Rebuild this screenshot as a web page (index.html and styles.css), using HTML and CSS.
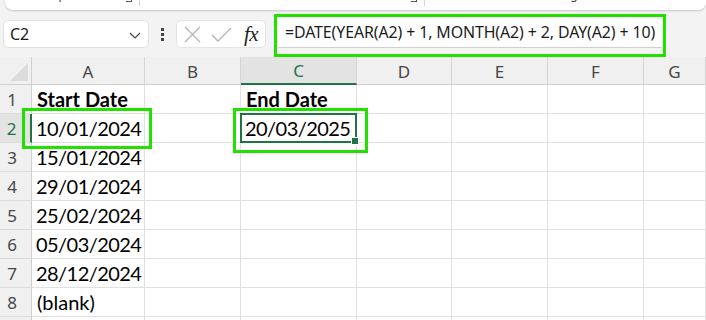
FILE: index.html
```html
<!DOCTYPE html>
<html>
<head>
<meta charset="utf-8">
<link rel="stylesheet" href="styles.css">
</head>
<body>
<div class="page">
  <div class="ribbon">
    <div class="rib-labels">
      <div class="rib-group g1"><span class="rib-label">Clipboard</span><span class="launcher"></span></div>
      <div class="rib-group g2"><span class="rib-label">Font</span><span class="launcher"></span></div>
      <div class="rib-group g3"><span class="rib-label">Alignment</span></div>
    </div>
  </div>

  <div class="fbar">
    <div class="namebox">
      <span class="name">C2</span>
      <svg class="chev" width="12" height="7" viewBox="0 0 12 7"><path d="M1 1 L6 6 L11 1" fill="none" stroke="#444" stroke-width="1.2"/></svg>
    </div>
    <div class="dots"><i></i><i></i><i></i></div>
    <div class="fxbox">
      <svg class="ico" width="17" height="17" viewBox="0 0 17 17"><path d="M1 1 L16 16 M16 1 L1 16" stroke="#b4b4b4" stroke-width="1.3" fill="none"/></svg>
      <svg class="ico" width="21" height="15" viewBox="0 0 21 15"><path d="M1 8 L7 14 L20 1" stroke="#b4b4b4" stroke-width="1.3" fill="none"/></svg>
      <span class="fx">fx</span>
    </div>
    <div class="formula">=DATE(YEAR(A2) + 1, MONTH(A2) + 2, DAY(A2) + 10)</div>
  </div>

  <div class="grid">
    <div class="corner"><svg width="20" height="20" viewBox="0 0 20 20"><path d="M20 2 L20 20 L2 20 Z" fill="#dcdcdc"/></svg></div>
    <div class="ch">A</div><div class="ch">B</div><div class="ch sel">C</div><div class="ch">D</div><div class="ch">E</div><div class="ch">F</div><div class="ch">G</div>

    <div class="rh">1</div><div class="c b">Start Date</div><div class="c"></div><div class="c b">End Date</div><div class="c"></div><div class="c"></div><div class="c"></div><div class="c"></div>
    <div class="rh sel">2</div><div class="c n">10/01/2024</div><div class="c"></div><div class="c n active">20/03/2025</div><div class="c"></div><div class="c"></div><div class="c"></div><div class="c"></div>
    <div class="rh">3</div><div class="c n">15/01/2024</div><div class="c"></div><div class="c"></div><div class="c"></div><div class="c"></div><div class="c"></div><div class="c"></div>
    <div class="rh">4</div><div class="c n">29/01/2024</div><div class="c"></div><div class="c"></div><div class="c"></div><div class="c"></div><div class="c"></div><div class="c"></div>
    <div class="rh">5</div><div class="c n">25/02/2024</div><div class="c"></div><div class="c"></div><div class="c"></div><div class="c"></div><div class="c"></div><div class="c"></div>
    <div class="rh">6</div><div class="c n">05/03/2024</div><div class="c"></div><div class="c"></div><div class="c"></div><div class="c"></div><div class="c"></div><div class="c"></div>
    <div class="rh">7</div><div class="c n">28/12/2024</div><div class="c"></div><div class="c"></div><div class="c"></div><div class="c"></div><div class="c"></div><div class="c"></div>
    <div class="rh">8</div><div class="c">(blank)</div><div class="c"></div><div class="c"></div><div class="c"></div><div class="c"></div><div class="c"></div><div class="c"></div>
    <div class="rh">9</div><div class="c"></div><div class="c"></div><div class="c"></div><div class="c"></div><div class="c"></div><div class="c"></div><div class="c"></div>
  </div>

  <div class="hl hl-formula"></div>
  <div class="hl hl-a2"></div>
  <div class="hl hl-c2"></div>
</div>
</body>
</html>
```

FILE: styles.css
```css
* { box-sizing: border-box; }
html, body { margin: 0; padding: 0; }
body {
  width: 706px;
  height: 320px;
  overflow: hidden;
  background: #f3f3f3;
  font-family: "Noto Sans", "Open Sans", sans-serif;
}
.page {
  position: relative;
  width: 706px;
  height: 320px;
  overflow: hidden;
}

/* ribbon remnant */
.ribbon {
  height: 10px;
  margin-left: 5px;
  background: #ffffff;
  border-radius: 0 0 8px 8px;
  box-shadow: 0 1px 2px rgba(0,0,0,0.18);
  overflow: hidden;
}
.rib-labels {
  display: flex;
  margin-top: -12px;
  height: 22px;
}
.rib-group {
  position: relative;
  display: flex;
  justify-content: center;
  border-right: 1px solid #d6d6d6;
  height: 18px;
  font-size: 12px;
  line-height: 14px;
  color: #444;
}
.g1 { width: 135px; }
.g2 { width: 285px; }
.g3 { flex: 1; border-right: none; padding-left: 40px; }
.launcher {
  position: absolute;
  right: 7px;
  top: 8px;
  width: 6px;
  height: 6px;
  border-right: 1px solid #555;
  border-bottom: 1px solid #555;
}

/* formula bar */
.fbar {
  display: flex;
  align-items: flex-start;
  height: 47px;
  padding-top: 10px;
}
.namebox {
  margin-left: 3px;
  width: 146px;
  height: 28px;
  background: #fff;
  border: 1px solid #e1e1e1;
  border-radius: 5px;
  display: flex;
  align-items: center;
  justify-content: space-between;
  padding: 0 7px 0 6px;
}
.name { font-size: 16px; color: #1b1b1b; }
.chev { margin-top: 2px; }
.dots {
  width: 27px;
  height: 28px;
  display: flex;
  flex-direction: column;
  align-items: center;
  justify-content: center;
  gap: 2px;
}
.dots i {
  display: block;
  width: 3px;
  height: 3px;
  background: #444;
}
.fxbox {
  width: 90px;
  height: 28px;
  background: #fff;
  border: 1px solid #e4e4e4;
  border-radius: 5px;
  display: flex;
  align-items: center;
  padding-left: 7px;
  gap: 10px;
}
.fx {
  font-family: "Liberation Serif", "DejaVu Serif", serif;
  font-style: italic;
  font-size: 21px;
  color: #222;
  margin-left: 2px;
  letter-spacing: -0.5px;
}
.formula {
  margin-left: 12px;
  margin-top: -3px;
  width: 384px;
  height: 31px;
  background: #fff;
  border-bottom: 1px solid #d0d0d0;
  font-size: 15.9px;
  line-height: 31px;
  padding-left: 7px;
  color: #1b1b1b;
  white-space: nowrap;
  letter-spacing: -0.1px;
}

/* grid */
.grid {
  display: grid;
  grid-template-columns: 32px 113px 96px 116px 95px 96px 96px 62px;
  grid-template-rows: 28px repeat(9, 29px);
  background: #fff;
}
.corner {
  background: #f0f0f0;
  border-right: 1px solid #d0d0d0;
  border-bottom: 1px solid #d0d0d0;
  display: flex;
  align-items: flex-end;
  justify-content: flex-end;
  padding: 0 3px 3px 0;
}
.ch {
  background: #f0f0f0;
  border-right: 1px solid #d6d6d6;
  border-bottom: 1px solid #d0d0d0;
  display: flex;
  align-items: center;
  justify-content: center;
  font-size: 17px;
  color: #474747;
  padding-top: 1px;
}
.ch.sel {
  background: #e3e3e3;
  color: #217346;
  border-bottom: 2px solid #217346;
}
.rh {
  background: #f0f0f0;
  border-right: 1px solid #d0d0d0;
  border-bottom: 1px solid #dcdcdc;
  display: flex;
  align-items: center;
  justify-content: center;
  padding-right: 7px;
  font-size: 17px;
  color: #474747;
}
.rh.sel {
  background: #e3e3e3;
  color: #217346;
  border-right: 2px solid #217346;
}
.c {
  border-right: 1px solid #e0e0e0;
  border-bottom: 1px solid #e0e0e0;
  display: flex;
  align-items: flex-end;
  padding: 0 0 2px 5px;
  font-family: "Lato", "Noto Sans", sans-serif;
  font-size: 20px;
  line-height: 24px;
  color: #000;
  white-space: nowrap;
}
.c.n { letter-spacing: -0.55px; padding-left: 4px; }
.c.b { font-weight: bold; }
.c.active { position: relative; overflow: visible; }
.c.active::after {
  content: "";
  position: absolute;
  left: -1px;
  top: -1px;
  right: -1px;
  bottom: -1px;
  border: 2px solid #217346;
}
.c.active::before {
  content: "";
  position: absolute;
  right: -3px;
  bottom: -3px;
  width: 6px;
  height: 6px;
  background: #217346;
  border: 1px solid #fff;
  z-index: 2;
}

/* green annotation boxes */
.hl {
  position: absolute;
  border: 3px solid #22e000;
  pointer-events: none;
}
.hl-formula { left: 274px; top: 14px; width: 392px; height: 43px; }
.hl-a2 { left: 22px; top: 108px; width: 130px; height: 41px; }
.hl-c2 { left: 233px; top: 108px; width: 135px; height: 45px; }
```
